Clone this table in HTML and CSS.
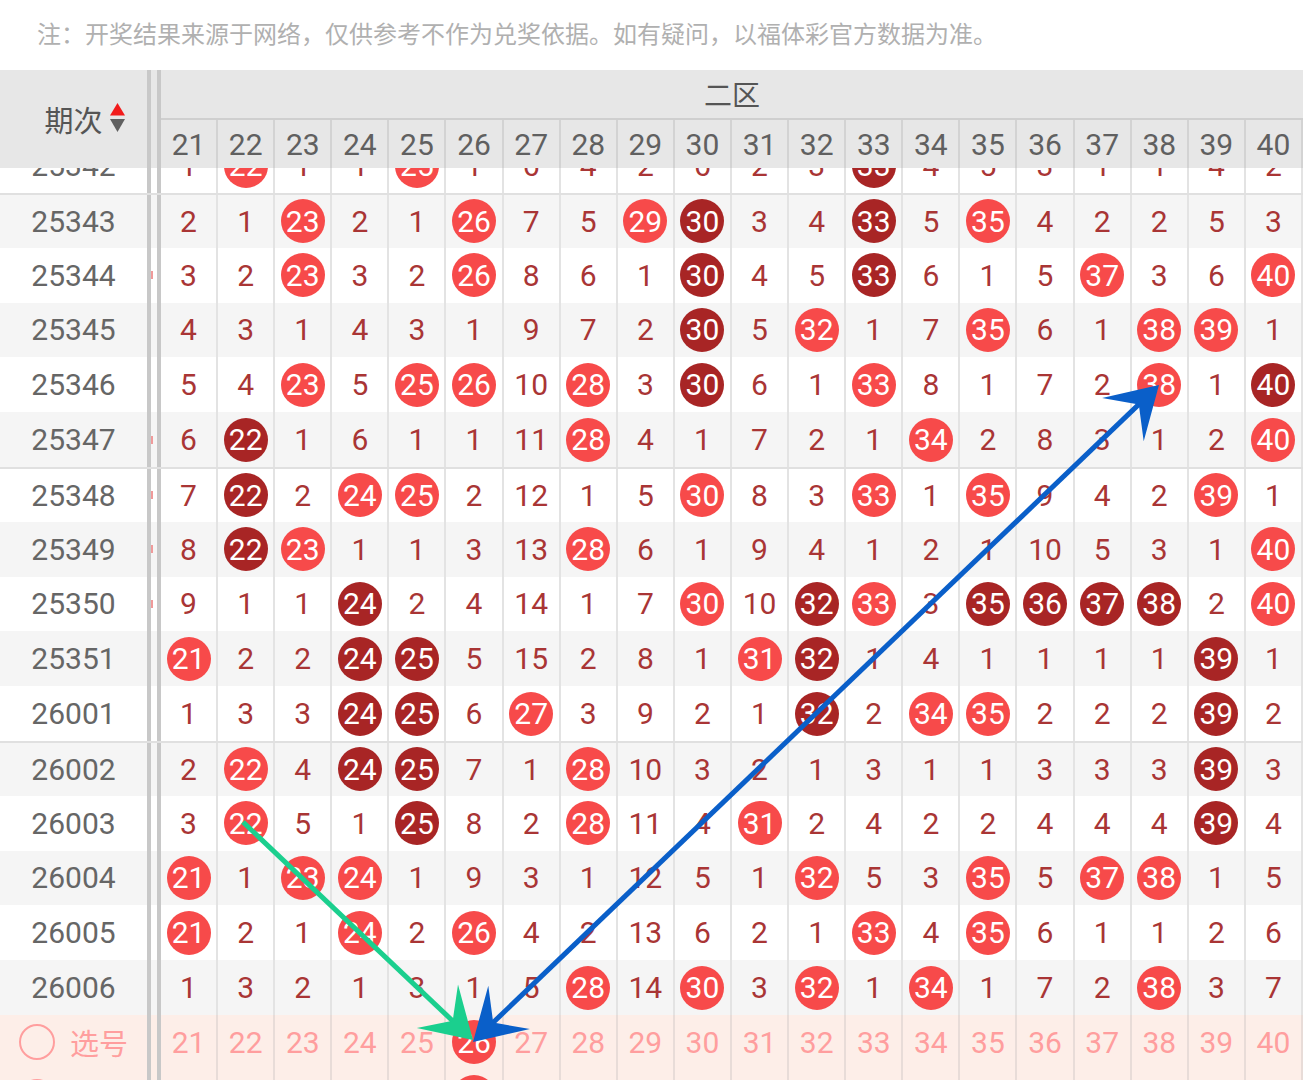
FILE: index.html
```
<!DOCTYPE html>
<html lang="zh-CN">
<head>
<meta charset="utf-8">
<title>走势图</title>
<link rel="stylesheet" href="styles.css">
</head>
<body>
<div class="notice">注：开奖结果来源于网络，仅供参考不作为兑奖依据。如有疑问，以福体彩官方数据为准。</div>
<div class="thead">
  <div class="th-period">期次<svg class="sort" width="15" height="30" viewBox="0 0 15 30"><polygon points="7.5,0 15,12.5 0,12.5" fill="#f21b1b"/><polygon points="0,16 15,16 7.5,29" fill="#606060"/></svg></div>
  <i class="sep"></i>
  <div class="zone">
    <div class="zone-title">二区</div>
    <div class="zone-nums"><span>21</span><span>22</span><span>23</span><span>24</span><span>25</span><span>26</span><span>27</span><span>28</span><span>29</span><span>30</span><span>31</span><span>32</span><span>33</span><span>34</span><span>35</span><span>36</span><span>37</span><span>38</span><span>39</span><span>40</span></div>
  </div>
</div>
<div class="tbody">
  <div class="cut">
    <div class="row"><b class="p">25342</b><i class="sep"></i><span>1</span><span><em class="b">22</em></span><span>1</span><span>1</span><span><em class="b">25</em></span><span>1</span><span>6</span><span>4</span><span>2</span><span>6</span><span>2</span><span>3</span><span><em class="b d">33</em></span><span>4</span><span>5</span><span>3</span><span>1</span><span>1</span><span>4</span><span>2</span></div>
  </div>
  <div class="row alt g"><b class="p">25343</b><i class="sep"></i><span>2</span><span>1</span><span><em class="b">23</em></span><span>2</span><span>1</span><span><em class="b">26</em></span><span>7</span><span>5</span><span><em class="b">29</em></span><span><em class="b d">30</em></span><span>3</span><span>4</span><span><em class="b d">33</em></span><span>5</span><span><em class="b">35</em></span><span>4</span><span>2</span><span>2</span><span>5</span><span>3</span></div>
  <div class="row"><b class="p">25344</b><i class="sep m"></i><span>3</span><span>2</span><span><em class="b">23</em></span><span>3</span><span>2</span><span><em class="b">26</em></span><span>8</span><span>6</span><span>1</span><span><em class="b d">30</em></span><span>4</span><span>5</span><span><em class="b d">33</em></span><span>6</span><span>1</span><span>5</span><span><em class="b">37</em></span><span>3</span><span>6</span><span><em class="b">40</em></span></div>
  <div class="row alt"><b class="p">25345</b><i class="sep"></i><span>4</span><span>3</span><span>1</span><span>4</span><span>3</span><span>1</span><span>9</span><span>7</span><span>2</span><span><em class="b d">30</em></span><span>5</span><span><em class="b">32</em></span><span>1</span><span>7</span><span><em class="b">35</em></span><span>6</span><span>1</span><span><em class="b">38</em></span><span><em class="b">39</em></span><span>1</span></div>
  <div class="row"><b class="p">25346</b><i class="sep"></i><span>5</span><span>4</span><span><em class="b">23</em></span><span>5</span><span><em class="b">25</em></span><span><em class="b">26</em></span><span>10</span><span><em class="b">28</em></span><span>3</span><span><em class="b d">30</em></span><span>6</span><span>1</span><span><em class="b">33</em></span><span>8</span><span>1</span><span>7</span><span>2</span><span><em class="b">38</em></span><span>1</span><span><em class="b d">40</em></span></div>
  <div class="row alt"><b class="p">25347</b><i class="sep m"></i><span>6</span><span><em class="b d">22</em></span><span>1</span><span>6</span><span>1</span><span>1</span><span>11</span><span><em class="b">28</em></span><span>4</span><span>1</span><span>7</span><span>2</span><span>1</span><span><em class="b">34</em></span><span>2</span><span>8</span><span>3</span><span>1</span><span>2</span><span><em class="b">40</em></span></div>
  <div class="row g"><b class="p">25348</b><i class="sep m"></i><span>7</span><span><em class="b d">22</em></span><span>2</span><span><em class="b">24</em></span><span><em class="b">25</em></span><span>2</span><span>12</span><span>1</span><span>5</span><span><em class="b">30</em></span><span>8</span><span>3</span><span><em class="b">33</em></span><span>1</span><span><em class="b">35</em></span><span>9</span><span>4</span><span>2</span><span><em class="b">39</em></span><span>1</span></div>
  <div class="row alt"><b class="p">25349</b><i class="sep m"></i><span>8</span><span><em class="b d">22</em></span><span><em class="b">23</em></span><span>1</span><span>1</span><span>3</span><span>13</span><span><em class="b">28</em></span><span>6</span><span>1</span><span>9</span><span>4</span><span>1</span><span>2</span><span>1</span><span>10</span><span>5</span><span>3</span><span>1</span><span><em class="b">40</em></span></div>
  <div class="row"><b class="p">25350</b><i class="sep m"></i><span>9</span><span>1</span><span>1</span><span><em class="b d">24</em></span><span>2</span><span>4</span><span>14</span><span>1</span><span>7</span><span><em class="b">30</em></span><span>10</span><span><em class="b d">32</em></span><span><em class="b">33</em></span><span>3</span><span><em class="b d">35</em></span><span><em class="b d">36</em></span><span><em class="b d">37</em></span><span><em class="b d">38</em></span><span>2</span><span><em class="b">40</em></span></div>
  <div class="row alt"><b class="p">25351</b><i class="sep"></i><span><em class="b">21</em></span><span>2</span><span>2</span><span><em class="b d">24</em></span><span><em class="b d">25</em></span><span>5</span><span>15</span><span>2</span><span>8</span><span>1</span><span><em class="b">31</em></span><span><em class="b d">32</em></span><span>1</span><span>4</span><span>1</span><span>1</span><span>1</span><span>1</span><span><em class="b d">39</em></span><span>1</span></div>
  <div class="row"><b class="p">26001</b><i class="sep"></i><span>1</span><span>3</span><span>3</span><span><em class="b d">24</em></span><span><em class="b d">25</em></span><span>6</span><span><em class="b">27</em></span><span>3</span><span>9</span><span>2</span><span>1</span><span><em class="b d">32</em></span><span>2</span><span><em class="b">34</em></span><span><em class="b">35</em></span><span>2</span><span>2</span><span>2</span><span><em class="b d">39</em></span><span>2</span></div>
  <div class="row alt g"><b class="p">26002</b><i class="sep"></i><span>2</span><span><em class="b">22</em></span><span>4</span><span><em class="b d">24</em></span><span><em class="b d">25</em></span><span>7</span><span>1</span><span><em class="b">28</em></span><span>10</span><span>3</span><span>2</span><span>1</span><span>3</span><span>1</span><span>1</span><span>3</span><span>3</span><span>3</span><span><em class="b d">39</em></span><span>3</span></div>
  <div class="row"><b class="p">26003</b><i class="sep"></i><span>3</span><span><em class="b">22</em></span><span>5</span><span>1</span><span><em class="b d">25</em></span><span>8</span><span>2</span><span><em class="b">28</em></span><span>11</span><span>4</span><span><em class="b">31</em></span><span>2</span><span>4</span><span>2</span><span>2</span><span>4</span><span>4</span><span>4</span><span><em class="b d">39</em></span><span>4</span></div>
  <div class="row alt"><b class="p">26004</b><i class="sep"></i><span><em class="b">21</em></span><span>1</span><span><em class="b">23</em></span><span><em class="b">24</em></span><span>1</span><span>9</span><span>3</span><span>1</span><span>12</span><span>5</span><span>1</span><span><em class="b">32</em></span><span>5</span><span>3</span><span><em class="b">35</em></span><span>5</span><span><em class="b">37</em></span><span><em class="b">38</em></span><span>1</span><span>5</span></div>
  <div class="row"><b class="p">26005</b><i class="sep"></i><span><em class="b">21</em></span><span>2</span><span>1</span><span><em class="b">24</em></span><span>2</span><span><em class="b">26</em></span><span>4</span><span>2</span><span>13</span><span>6</span><span>2</span><span>1</span><span><em class="b">33</em></span><span>4</span><span><em class="b">35</em></span><span>6</span><span>1</span><span>1</span><span>2</span><span>6</span></div>
  <div class="row alt"><b class="p">26006</b><i class="sep"></i><span>1</span><span>3</span><span>2</span><span>1</span><span>3</span><span>1</span><span>5</span><span><em class="b">28</em></span><span>14</span><span><em class="b">30</em></span><span>3</span><span><em class="b">32</em></span><span>1</span><span><em class="b">34</em></span><span>1</span><span>7</span><span>2</span><span><em class="b">38</em></span><span>3</span><span>7</span></div>
  <div class="row pick"><b class="p"><i class="ring"></i>选号</b><i class="sep"></i><span>21</span><span>22</span><span>23</span><span>24</span><span>25</span><span><em class="b">26</em></span><span>27</span><span>28</span><span>29</span><span>30</span><span>31</span><span>32</span><span>33</span><span>34</span><span>35</span><span>36</span><span>37</span><span>38</span><span>39</span><span>40</span></div>
  <div class="row pick"><b class="p"><i class="ring"></i>选号</b><i class="sep"></i><span>21</span><span>22</span><span>23</span><span>24</span><span>25</span><span><em class="b">26</em></span><span>27</span><span>28</span><span>29</span><span>30</span><span>31</span><span>32</span><span>33</span><span>34</span><span>35</span><span>36</span><span>37</span><span>38</span><span>39</span><span>40</span></div>
</div>
<svg class="arrows" width="1303" height="1080" viewBox="0 0 1303 1080">
  <line x1="243" y1="822" x2="458" y2="1026" stroke="#1bcf8e" stroke-width="5"/>
  <polygon points="473,1040 416.8,1028.1 452.7,1020.7 458,984.5" fill="#1bcf8e"/>
  <line x1="489" y1="1026.5" x2="1143" y2="400.4" stroke="#0a5fc9" stroke-width="5"/>
  <polygon points="473,1042 488.3,985.7 493.2,1022.6 529.9,1029.1" fill="#0a5fc9"/>
  <polygon points="1159,385 1102.1,397.9 1138.8,404.4 1143.7,441.3" fill="#0a5fc9"/>
</svg>
</body>
</html>
```
FILE: styles.css
```
* { box-sizing: border-box; margin: 0; padding: 0; }
html, body { width: 1303px; height: 1080px; overflow: hidden; background: #fff; }
body { position: relative; font-family: Roboto, "Noto Sans CJK SC", sans-serif; }

.notice {
  height: 70px;
  display: flex;
  align-items: center;
  padding: 0 0 6px 37px;
  font: 24px "Noto Sans CJK SC", sans-serif;
  color: #b0b0b0;
  white-space: nowrap;
}

.thead {
  display: grid;
  grid-template-columns: 147px 14px 1fr;
  height: 98px;
  background: #e7e7e7;
}
.th-period {
  display: flex;
  align-items: center;
  justify-content: center;
  padding-left: 22px;
  gap: 7px;
  font: 29px "Noto Sans CJK SC", sans-serif;
  color: #555;
}
.sort { display: block; margin-top: -2px; }
.sep {
  display: flex;
  align-items: center;
  border-left: 4px solid #c8c8c8;
  border-right: 4px solid #c8c8c8;
}
.sep.m::after {
  content: "";
  width: 2px;
  height: 8px;
  background: #f09a9a;
}
.zone { display: flex; flex-direction: column; }
.zone-title {
  height: 50px;
  border-bottom: 2px solid #cfcfcf;
  display: flex;
  align-items: center;
  justify-content: center;
  font: 28px "Noto Sans CJK SC", sans-serif;
  color: #555;
}
.zone-nums { flex: 1; display: grid; grid-template-columns: repeat(20, 1fr); }
.zone-nums span {
  border-right: 2px solid #d3d3d3;
  display: flex;
  align-items: center;
  justify-content: center;
  font-size: 30px;
  color: #606060;
}

.cut {
  height: 25px;
  overflow: hidden;
  display: flex;
  flex-direction: column;
  justify-content: flex-end;
}
.cut .row { flex: none; }

.row {
  display: grid;
  grid-template-columns: 147px 14px repeat(20, 1fr);
  height: 54.8px;
  background: #fff;
}
.row.alt { background: #f5f5f5; }
.row.g { border-top: 2px solid #e0e0e0; }
.row > span {
  border-right: 2px solid #e3e3e3;
  display: flex;
  align-items: center;
  justify-content: center;
  font-size: 30px;
  color: #a93535;
}
.row > .p {
  display: flex;
  align-items: center;
  justify-content: center;
  font-weight: 400;
  font-size: 30px;
  color: #666;
}
.b {
  width: 44px;
  height: 44px;
  border-radius: 50%;
  background: #f74a4a;
  color: #fff;
  font-style: normal;
  display: flex;
  align-items: center;
  justify-content: center;
}
.b.d { background: #a82525; }

.row.pick { background: #fdeee8; }
.row.pick > span { color: #ff9e9e; border-right-color: #e8dcd8; }
.row.pick > .p {
  gap: 15px;
  font: 29px "Noto Sans CJK SC", sans-serif;
  color: #ff9e9e;
}
.ring {
  width: 36px;
  height: 36px;
  border: 2px solid #ff9e9e;
  border-radius: 50%;
}

.arrows {
  position: absolute;
  left: 0;
  top: 0;
  pointer-events: none;
}
```
